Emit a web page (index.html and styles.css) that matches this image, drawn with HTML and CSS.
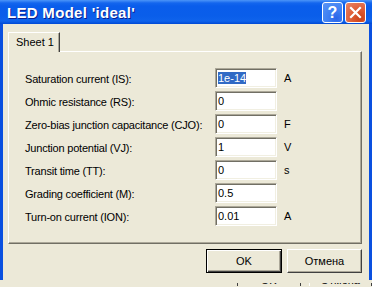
FILE: index.html
```html
<!DOCTYPE html>
<html lang="en">
<head>
    <meta charset="UTF-8">
    <title>LED Model 'ideal'</title>
    <link rel="stylesheet" href="styles.css">
</head>
<body>
    <div class="window">
        <!-- Title bar -->
        <div class="titlebar">
            <span class="title">LED Model 'ideal'</span>
            <div class="caption-buttons">
                <div class="cap help">?</div>
                <div class="cap close">
                    <svg width="13" height="13" viewBox="0 0 13 13">
                        <path d="M2 2 L11 11 M11 2 L2 11" stroke="#fff" stroke-width="2.2" stroke-linecap="square"/>
                    </svg>
                </div>
            </div>
        </div>

        <div class="client">
            <!-- Tabs -->
            <div class="tabs">
                <div class="tab">Sheet 1</div>
            </div>

            <!-- Sheet with parameters -->
            <div class="sheet">
                <div class="params">
                    <span class="label">Saturation current (IS):</span>
                    <div class="field"><span class="sel">1e-14</span></div>
                    <span class="unit">A</span>

                    <span class="label">Ohmic resistance (RS):</span>
                    <div class="field">0</div>
                    <span class="unit"></span>

                    <span class="label">Zero-bias junction capacitance (CJO):</span>
                    <div class="field">0</div>
                    <span class="unit">F</span>

                    <span class="label">Junction potential (VJ):</span>
                    <div class="field">1</div>
                    <span class="unit">V</span>

                    <span class="label">Transit time (TT):</span>
                    <div class="field">0</div>
                    <span class="unit">s</span>

                    <span class="label">Grading coefficient (M):</span>
                    <div class="field">0.5</div>
                    <span class="unit"></span>

                    <span class="label">Turn-on current (ION):</span>
                    <div class="field">0.01</div>
                    <span class="unit">A</span>
                </div>
            </div>

            <!-- OK / Cancel -->
            <div class="actions">
                <div class="btn default">OK</div>
                <div class="btn">Отмена</div>
            </div>
        </div>
    </div>

    <!-- window lying behind the dialog -->
    <div class="behind">
        <div class="behind-btn">OK</div>
        <div class="behind-btn second">Отмена</div>
    </div>
</body>
</html>
```

FILE: styles.css
```css
body {
    margin: 0;
    width: 372px;
    height: 287px;
    overflow: hidden;
    font-family: "Liberation Sans", Arial, sans-serif;
    font-size: 11px;
    color: #000;
    background-color: #ECE9D8;
}
.window {
    width: 372px;
    background-color: #0A50E0;
}
.titlebar {
    height: 24px;
    display: flex;
    align-items: center;
    justify-content: space-between;
    padding-left: 7px;
    box-sizing: border-box;
    background: linear-gradient(#4C95F8 0, #1466EE 3px, #0A5DEB 6px, #0A5EEA 16px, #0F63EC 21px, #0049D4 24px);
}
.title {
    color: #fff;
    font-weight: bold;
    font-size: 15px;
    letter-spacing: 0.3px;
    text-shadow: 1px 1px 0 #0A1E8E;
    padding-top: 1px;
}
.caption-buttons {
    display: flex;
    margin-right: 6px;
    padding-top: 1px;
}
.cap {
    width: 19px;
    height: 19px;
    border: 1px solid #fff;
    border-radius: 3px;
    display: flex;
    align-items: center;
    justify-content: center;
    margin-left: 2px;
}
.help {
    background: radial-gradient(circle at 70% 80%, #2A65E8 0, #3F7FF2 40%, #5A95F5 100%);
    color: #fff;
    font-weight: bold;
    font-size: 16px;
}
.close {
    background: radial-gradient(circle at 75% 80%, #C9421A 0, #DE5A32 40%, #E8876A 100%);
}
.client {
    margin: 0 3px 3px 3px;
    height: 256px;
    background-color: #ECE9D8;
    padding: 8px 7px 0 5px;
    box-sizing: border-box;
}
.tabs {
    display: flex;
    height: 19px;
}
.tab {
    position: relative;
    z-index: 1;
    height: 20px;
    width: 52px;
    padding-left: 7px;
    white-space: nowrap;
    line-height: 19px;
    background-color: #ECE9D8;
    border-top: 1px solid #fff;
    border-left: 1px solid #fff;
    border-right: 1px solid #404040;
    box-shadow: inset -1px 0 0 #ACA899;
    box-sizing: border-box;
}
.sheet {
    height: 193px;
    box-sizing: border-box;
    border: 1px solid;
    border-color: #fff #716F64 #716F64 #fff;
    box-shadow: inset -1px -1px 0 #ACA899;
    padding: 16px 0 0 16px;
}
.params {
    display: grid;
    grid-template-columns: 190px 62px auto;
    grid-auto-rows: 20px;
    row-gap: 3px;
    align-items: center;
}
.label {
    padding-top: 1px;
    letter-spacing: -0.2px;
    white-space: nowrap;
}
.field {
    height: 20px;
    box-sizing: border-box;
    background-color: #fff;
    border: 1px solid;
    border-color: #ACA899 #fff #fff #ACA899;
    box-shadow: inset 1px 1px 0 #716F64, inset -1px -1px 0 #F1EFE2;
    padding: 0 2px;
    line-height: 18px;
}
.sel {
    background-color: #316AC5;
    color: #fff;
}
.unit {
    padding-left: 7px;
}
.actions {
    display: flex;
    justify-content: flex-end;
    gap: 5px;
    margin-top: 5px;
}
.btn {
    width: 75px;
    height: 24px;
    box-sizing: border-box;
    line-height: 22px;
    text-align: center;
    background-color: #ECE9D8;
    border: 1px solid;
    border-color: #fff #404040 #404040 #fff;
    box-shadow: inset -1px -1px 0 #ACA899;
}
.btn.default {
    width: 76px;
    border-color: #000;
    box-shadow: inset 1px 1px 0 #fff, inset -1px -1px 0 #404040, inset -2px -2px 0 #ACA899;
}
.behind {
    height: 3px;
    display: flex;
    padding-left: 237px;
    gap: 8px;
    overflow: hidden;
    background-color: #ECE9D8;
}
.behind-btn {
    width: 70px;
    height: 20px;
    margin-top: -9px;
    text-align: center;
    border-left: 1px solid #404040;
    border-right: 1px solid #404040;
}
.behind-btn.second {
    border-left-color: #fff;
}
```
